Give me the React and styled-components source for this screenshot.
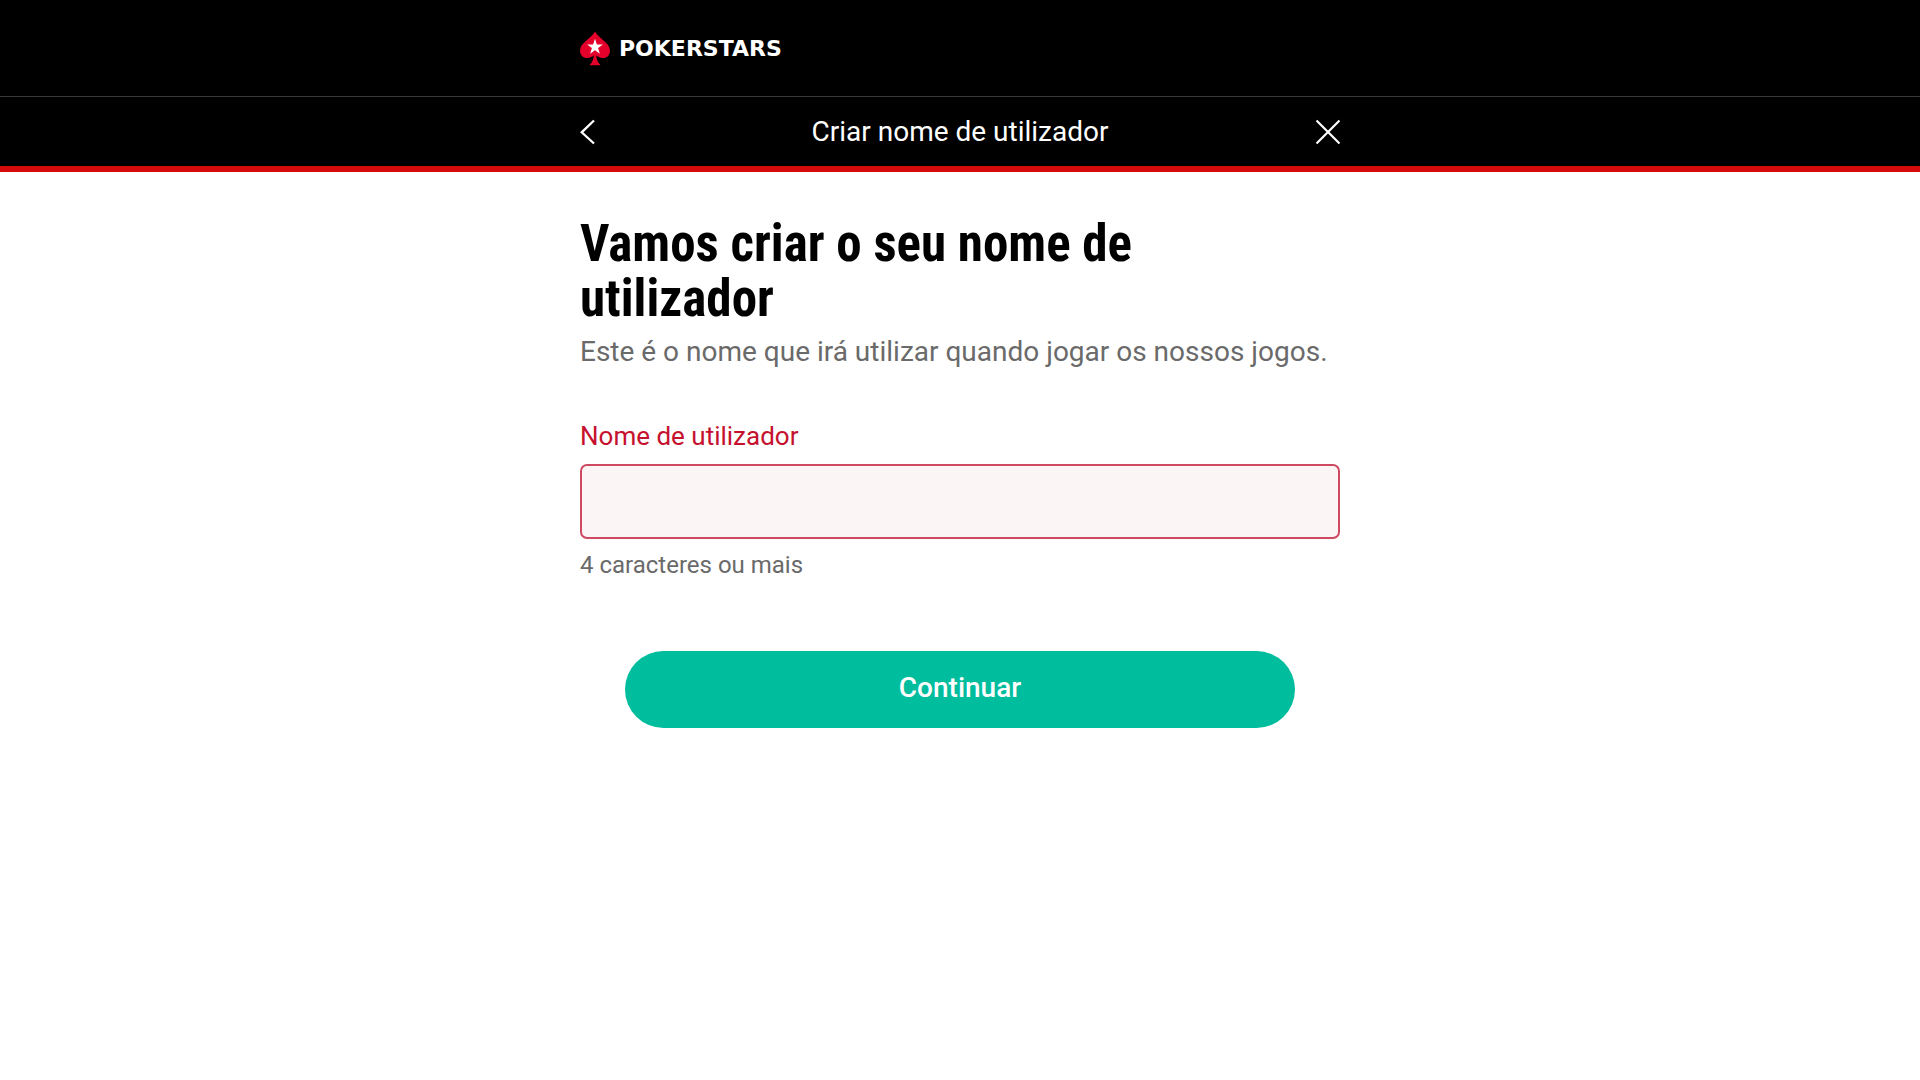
import React, { useState } from "react";
import styled, { createGlobalStyle } from "styled-components";

const GlobalStyle = createGlobalStyle`
  * {
    box-sizing: border-box;
  }

  body {
    margin: 0;
    background: #fff;
    font-family: Roboto, "Noto Sans", sans-serif;
  }
`;

const Column = styled.div`
  width: 100%;
  max-width: 760px;
  margin: 0 auto;
`;

const TopBar = styled.header`
  background: #000;
  border-bottom: 1px solid #3a3a3a;
  padding: 31px 16px 30px;
`;

const LogoRow = styled(Column)`
  display: flex;
`;

const Logo = styled.a`
  display: flex;
  align-items: center;
  gap: 9px;
  height: 35px;
  color: #fff;
  font-family: "DejaVu Sans", sans-serif;
  font-size: 22px;
  font-weight: 700;
  text-decoration: none;
`;

const TitleBar = styled.nav`
  background: #000;
  border-bottom: 6px solid #d50a0a;
  padding: 0 16px;
`;

const TitleRow = styled(Column)`
  display: flex;
  align-items: center;
  justify-content: space-between;
  height: 69px;
`;

const PageTitle = styled.span`
  color: #fff;
  font-size: 28px;
  line-height: 32px;
`;

const IconButton = styled.button`
  display: flex;
  padding: 0;
  background: transparent;
  border: none;
  color: #fff;
  cursor: pointer;
`;

const Main = styled.main`
  padding: 44px 16px;
`;

const Heading = styled.h1`
  max-width: 640px;
  margin: 0;
  color: #000;
  font-family: "Roboto Condensed", Roboto, sans-serif;
  font-size: 51px;
  font-weight: 700;
  line-height: 55px;
`;

const Intro = styled.p`
  margin: 10px 0 52px;
  color: #6a6a6a;
  font-size: 28px;
  line-height: 32px;
`;

const Field = styled.div`
  display: flex;
  flex-direction: column;
  margin-bottom: 70px;
`;

const Label = styled.label`
  margin-bottom: 12px;
  color: #c5112e;
  font-size: 26px;
  line-height: 32px;
`;

const TextInput = styled.input`
  height: 75px;
  padding: 0 20px;
  background: #fbf5f5;
  border: 2px solid #cf4963;
  border-radius: 7px;
  font-family: inherit;
  font-size: 28px;
  outline: none;
`;

const Hint = styled.span`
  margin-top: 10px;
  color: #6a6a6a;
  font-size: 24px;
  line-height: 32px;
`;

const SubmitButton = styled.button`
  display: block;
  width: calc(100% - 90px);
  height: 77px;
  margin: 0 auto;
  padding: 0 0 4px;
  background: #00bd9d;
  border: none;
  border-radius: 39px;
  color: #fff;
  font-family: inherit;
  font-size: 28px;
  font-weight: 500;
  cursor: pointer;
`;

function SpadeIcon() {
  return (
    <svg width="30" height="35" viewBox="0 0 31 35" aria-hidden="true">
      <path
        fill="#e4002b"
        d="M15.5 0C12.500 6.500 0 11.500 0 19.700c0 4.500 3.300 7.600 7.300 7.600 3.300 0 5.600-1.300 6.900-2.700 0 3.700-1.500 7.700-4.300 9.900v.4h11.200v-.4c-2.800-2.200-4.300-6.200-4.300-9.900 1.300 1.400 3.600 2.700 6.900 2.700 4 0 7.300-3.100 7.300-7.600C31 11.500 18.500 6.500 15.500 0z"
      />
      <path
        fill="#fff"
        d="M15.500 7.500l2 5.900h6.100l-4.900 3.700 1.800 5.900-5-3.600-5 3.600 1.800-5.900-4.900-3.700h6.100z"
      />
    </svg>
  );
}

function App() {
  const [username, setUsername] = useState("");

  return (
    <>
      <GlobalStyle />
      <TopBar>
        <LogoRow>
          <Logo href="#">
            <SpadeIcon />
            POKERSTARS
          </Logo>
        </LogoRow>
      </TopBar>
      <TitleBar>
        <TitleRow>
          <IconButton type="button" aria-label="Voltar">
            <svg width="24" height="26" viewBox="0 0 24 26" fill="none" stroke="currentColor" strokeWidth="2.300">
              <path d="M14 1.500L1.700 13.300l12.300 11.200" />
            </svg>
          </IconButton>
          <PageTitle>Criar nome de utilizador</PageTitle>
          <IconButton type="button" aria-label="Fechar">
            <svg width="24" height="26" viewBox="0 0 24 26" fill="none" stroke="currentColor" strokeWidth="2.200">
              <path d="M.5 1.500l23 23M23.500 1.500l-23 23" />
            </svg>
          </IconButton>
        </TitleRow>
      </TitleBar>
      <Main>
        <Column>
          <Heading>Vamos criar o seu nome de utilizador</Heading>
          <Intro>Este é o nome que irá utilizar quando jogar os nossos jogos.</Intro>
          <form onSubmit={(e) => e.preventDefault()}>
            <Field>
              <Label htmlFor="username">Nome de utilizador</Label>
              <TextInput
                id="username"
                type="text"
                value={username}
                onChange={(e) => setUsername(e.target.value)}
                aria-invalid="true"
                aria-describedby="username-hint"
              />
              <Hint id="username-hint">4 caracteres ou mais</Hint>
            </Field>
            <SubmitButton type="submit">Continuar</SubmitButton>
          </form>
        </Column>
      </Main>
    </>
  );
}

export default App;
